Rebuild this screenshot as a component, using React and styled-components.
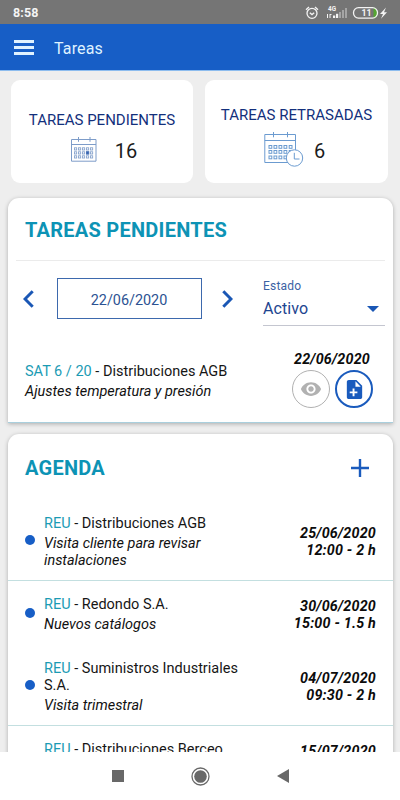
import React, { useState } from "react";
import styled, { createGlobalStyle } from "styled-components";

const GlobalStyle = createGlobalStyle`
  * {
    box-sizing: border-box;
  }
  body {
    margin: 0;
    background-color: #eeeeee;
    font-family: Roboto, "Liberation Sans", sans-serif;
  }
`;

const Screen = styled.div`
  width: 400px;
  height: 800px;
  display: flex;
  flex-direction: column;
  overflow: hidden;
  background-color: #eeeeee;
`;

const StatusBar = styled.div`
  height: 24px;
  flex-shrink: 0;
  display: flex;
  align-items: center;
  justify-content: space-between;
  padding: 1px 10px 0 13px;
  background-color: #757575;
  color: #f4f4f4;
`;
const Clock = styled.span`
  font-size: 12.5px;
  font-weight: 700;
  letter-spacing: 0.1px;
`;
const StatusIcons = styled.svg`
  width: 86px;
  height: 16px;
`;

const Toolbar = styled.header`
  height: 47px;
  flex-shrink: 0;
  display: flex;
  align-items: center;
  gap: 20px;
  padding-left: 14px;
  background-color: #175ec6;
  border-bottom: 1px solid #8dbcee;
`;
const MenuButton = styled.button`
  width: 20px;
  height: 15px;
  padding: 0;
  border: none;
  background-color: transparent;
  display: flex;
  flex-direction: column;
  justify-content: space-between;
  cursor: pointer;
`;
const MenuLine = styled.span`
  width: 100%;
  height: 3px;
  background-color: #e0f2ff;
`;
const ToolbarTitle = styled.h1`
  margin: 2px 0 0;
  font-size: 16px;
  font-weight: 400;
  letter-spacing: 0.15px;
  color: #dff2ff;
`;

const Content = styled.main`
  flex: 1;
  min-height: 0;
  overflow: hidden;
  padding: 9px 7px 0 8px;
`;

const Stats = styled.div`
  display: flex;
  gap: 12px;
  padding: 0 5px 0 3px;
  margin-bottom: 15px;
`;
const StatCard = styled.div`
  width: ${({ $width }) => $width}px;
  height: 103px;
  display: flex;
  flex-direction: column;
  align-items: center;
  padding-top: ${({ $top }) => $top}px;
  border-radius: 9px;
  background-color: #fff;
`;
const StatLabel = styled.div`
  height: 20px;
  font-size: 15px;
  line-height: 20px;
  color: #13307c;
  white-space: nowrap;
`;
const StatBody = styled.div`
  display: flex;
  align-items: center;
  gap: ${({ $gap }) => $gap}px;
  padding-left: ${({ $left }) => $left}px;
  padding-right: ${({ $right }) => $right}px;
  margin-top: 7px;
`;
const StatValue = styled.span`
  padding-top: 2px;
  font-size: 20px;
  line-height: 24px;
  color: #1c1c1c;
`;

const Card = styled.section`
  height: ${({ $height }) => $height}px;
  margin-bottom: 11px;
  overflow: hidden;
  background-color: #fff;
  border-radius: 11px 11px 0 0;
  border-bottom: 1px solid #a9cfdd;
  box-shadow: 0 1px 4px rgba(0, 0, 0, 0.28);
`;
const CardHeader = styled.div`
  height: ${({ $height }) => $height}px;
  display: flex;
  align-items: center;
  justify-content: space-between;
  margin: 0 8px;
  padding: 2px 16px 0 9px;
  border-bottom: 1px solid ${({ $line }) => ($line ? "#ebebeb" : "transparent")};
`;
const CardTitle = styled.h2`
  margin: 0;
  font-size: 20px;
  font-weight: 700;
  letter-spacing: 0.25px;
  color: #0d93b5;
`;

const Filters = styled.div`
  display: flex;
  align-items: flex-start;
  padding: 17px 8px 0 15px;
`;
const ArrowButton = styled.button`
  width: 11px;
  height: 42px;
  padding: 0;
  border: none;
  background-color: transparent;
  display: flex;
  align-items: center;
  cursor: pointer;
`;
const DateBox = styled.div`
  width: 145px;
  height: 41px;
  margin: 0 20px 0 23px;
  display: flex;
  align-items: center;
  justify-content: center;
  padding: 3px 1px 0 0;
  border: 1px solid #3d69ad;
  font-size: 14.4px;
  color: #2b5292;
`;
const Select = styled.div`
  width: 122px;
  height: 48px;
  margin-left: 30px;
  border-bottom: 1px solid #c4c6d0;
`;
const SelectLabel = styled.div`
  font-size: 12px;
  line-height: 17px;
  letter-spacing: 0.2px;
  color: #3b62a3;
`;
const SelectValue = styled.div`
  display: flex;
  align-items: center;
  justify-content: space-between;
  padding: 2px 6px 0 0;
  font-size: 16px;
  line-height: 24px;
  letter-spacing: 0.1px;
  color: #1d4590;
`;

const Task = styled.div`
  display: flex;
  justify-content: space-between;
  padding: 25px 20px 0 17px;
`;
const TaskText = styled.div`
  padding-top: 12px;
`;
const TaskSide = styled.div`
  display: flex;
  flex-direction: column;
  align-items: flex-end;
`;
const TaskDate = styled.div`
  padding-right: 3px;
`;
const TaskActions = styled.div`
  display: flex;
  gap: 5px;
  margin-top: 2px;
`;
const RoundButton = styled.button`
  width: 38px;
  height: 38px;
  padding: 0;
  display: flex;
  align-items: center;
  justify-content: center;
  border: ${({ $border }) => $border}px solid ${({ $color }) => $color};
  border-radius: 50%;
  background-color: #fff;
  color: ${({ $color }) => $color};
  cursor: pointer;
`;

const Name = styled.div`
  font-size: 14.5px;
  line-height: 17px;
  color: #161616;
`;
const Code = styled.span`
  color: #1b9bb4;
`;
const Description = styled.div`
  margin-top: 3px;
  font-size: 14.45px;
  font-style: italic;
  line-height: 17px;
  color: #111;
`;
const When = styled.div`
  font-size: 14.3px;
  font-style: italic;
  font-weight: 700;
  line-height: 17px;
  letter-spacing: 0.2px;
  text-align: right;
  white-space: nowrap;
  color: #0c0c0c;
`;

const AgendaItem = styled.div`
  display: flex;
  align-items: center;
  height: ${({ $height }) => $height}px;
  padding: 0 17px;
  border-bottom: 1px solid ${({ $line }) => ($line ? "#c3dfe0" : "transparent")};
`;
const Dot = styled.span`
  width: 10px;
  height: 10px;
  flex-shrink: 0;
  margin-right: 9px;
  border-radius: 50%;
  background-color: #175ec6;
`;
const AgendaText = styled.div`
  width: 205px;
  margin-right: auto;
  padding-top: 4px;
`;
const AgendaWhen = styled(When)`
  padding-top: 4px;
`;

const NavBar = styled.nav`
  height: 48px;
  flex-shrink: 0;
  display: flex;
  align-items: center;
  justify-content: center;
  gap: 67px;
  background-color: #fff;
`;

const agenda = [
  {
    name: "Distribuciones AGB",
    text: "Visita cliente para revisar instalaciones",
    date: "25/06/2020",
    time: "12:00 - 2 h",
    height: 81,
    line: true,
  },
  {
    name: "Redondo S.A.",
    text: "Nuevos catálogos",
    date: "30/06/2020",
    time: "15:00 - 1.5 h",
    height: 64,
  },
  {
    name: "Suministros Industriales S.A.",
    text: "Visita trimestral",
    date: "04/07/2020",
    time: "09:30 - 2 h",
    height: 81,
    line: true,
  },
  {
    name: "Distribuciones Berceo",
    text: "Visita trimestral",
    date: "15/07/2020",
    time: "10:00 - 1 h",
    height: 64,
  },
];

const CalendarIcon = () => (
  <svg width="26" height="26" viewBox="0 0 26 26" fill="none" stroke="#7d9cc9">
    <path d="M.5 2.5h24.500v21.700H.5zM.5 7.500h24.500" />
    <path d="M7.500 0v4.800M19 0v4.800" />
    {[10.8, 14.8, 18.8].map((y) =>
      [3.5, 7.5, 11.5, 15.5, 19.5].map((x) => (
        <rect key={`${x}-${y}`} x={x} y={y} width="2.2" height="2.2" strokeWidth=".8" />
      ))
    )}
    <rect x="15.5" y="14.8" width="2.2" height="2.2" fill="#2f5fae" stroke="#4a74b8" />
  </svg>
);

const LateCalendarIcon = () => (
  <svg width="40" height="35" viewBox="0 0 40 35" fill="none" stroke="#6b9bd0">
    <path d="M.8 2.500h30.700v28H.8zM.8 8.500h30.700" />
    <path d="M9.500 0v5.300M23.500 0v5.300" />
    {[13.5, 18.5, 24].map((y) =>
      [5, 10, 15, 20, 25.2].map((x) => (
        <rect key={`${x}-${y}`} x={x} y={y} width="2.8" height="2.8" />
      ))
    )}
    <circle cx="30.5" cy="26" r="8.2" fill="#fff" />
    <path d="M30.300 20.800v6.200h5.200" />
  </svg>
);

const StatusGlyphs = () => (
  <StatusIcons viewBox="0 0 86 16" fill="none" stroke="#f4f4f4">
    <circle cx="8" cy="8.3" r="5" strokeWidth="1.3" />
    <path d="M5.800 7.800l2.200 1.800 2.200-1.800M2 4.800l3-2.800M14 4.800l-3-2.800" strokeWidth="1.3" />
    <text x="24" y="6.3" fontSize="6.4" fontWeight="700" fill="#f4f4f4" stroke="none">
      4G
    </text>
    <path d="M23.500 9v4M26 9v4M26 9.500h1.500" />
    <g stroke="none" fill="#f4f4f4">
      <rect x="29" y="10.5" width="2.2" height="2.5" />
      <rect x="32" y="8.8" width="2.2" height="4.2" />
      <g fill="#a5a5a5">
        <rect x="35" y="7" width="2" height="6" />
        <rect x="38" y="5" width="2" height="8" />
        <rect x="41" y="3" width="2" height="10" />
      </g>
    </g>
    <path d="M70 3.200h.5q2.500 0 2.500 4.800t-2.500 4.800h-.5z" fill="#55a532" stroke="#55a532" />
    <rect x="49.5" y="2.7" width="24" height="10.4" rx="5" strokeWidth="1.3" />
    <text x="57.5" y="11.2" fontSize="8.8" fontWeight="700" fill="#f4f4f4" stroke="none">
      11
    </text>
    <path d="M82 2.500l-6 6.500h3l-2 4.800 6-6.600h-3z" fill="#f4f4f4" stroke="none" />
  </StatusIcons>
);

const Chevron = ({ right }) => (
  <svg width="11" height="18" viewBox="0 0 11 18" fill="none" stroke="#1a57b5" strokeWidth="3">
    <path d={right ? "M1.300 1.300L9 9l-7.700 7.700" : "M9.700 1.300L2 9l7.700 7.700"} />
  </svg>
);

const EyeIcon = () => (
  <svg width="22" height="22" viewBox="0 0 24 24" fill="currentColor">
    <path d="M12 4.500C7 4.500 2.730 7.610 1 12c1.730 4.390 6 7.500 11 7.500s9.270-3.110 11-7.500c-1.730-4.390-6-7.500-11-7.500zM12 17c-2.760 0-5-2.240-5-5s2.240-5 5-5 5 2.240 5 5-2.240 5-5 5zm0-8c-1.660 0-3 1.340-3 3s1.340 3 3 3 3-1.340 3-3-1.340-3-3-3z" />
  </svg>
);

const NoteAddIcon = () => (
  <svg width="23" height="23" viewBox="0 0 24 24" fill="currentColor">
    <path d="M14 2H6c-1.100 0-2 .9-2 2v16c0 1.100.9 2 2 2h12c1.100 0 2-.9 2-2V8l-6-6zm1 14h-3v3h-2v-3H7v-2h3v-3h2v3h3v2zm-2-7V3.500L18.500 9H13z" />
  </svg>
);

const App = () => {
  const [items] = useState(agenda);

  return (
    <>
      <GlobalStyle />
      <Screen>
        <StatusBar>
          <Clock>8:58</Clock>
          <StatusGlyphs />
        </StatusBar>
        <Toolbar>
          <MenuButton aria-label="Menú">
            <MenuLine />
            <MenuLine />
            <MenuLine />
          </MenuButton>
          <ToolbarTitle>Tareas</ToolbarTitle>
        </Toolbar>
        <Content>
          <Stats>
            <StatCard $width={182} $top={30}>
              <StatLabel>TAREAS PENDIENTES</StatLabel>
              <StatBody $gap={18} $left={4} $right={0}>
                <CalendarIcon />
                <StatValue>16</StatValue>
              </StatBody>
            </StatCard>
            <StatCard $width={183} $top={25}>
              <StatLabel>TAREAS RETRASADAS</StatLabel>
              <StatBody $gap={10} $left={0} $right={4}>
                <LateCalendarIcon />
                <StatValue>6</StatValue>
              </StatBody>
            </StatCard>
          </Stats>

          <Card $height={225}>
            <CardHeader $height={63} $line>
              <CardTitle>TAREAS PENDIENTES</CardTitle>
            </CardHeader>
            <Filters>
              <ArrowButton aria-label="Anterior">
                <Chevron />
              </ArrowButton>
              <DateBox>22/06/2020</DateBox>
              <ArrowButton aria-label="Siguiente">
                <Chevron right />
              </ArrowButton>
              <Select>
                <SelectLabel>Estado</SelectLabel>
                <SelectValue>
                  Activo
                  <svg width="12" height="7" viewBox="0 0 12 7">
                    <path d="M0 0h12l-6 6z" fill="#1a57b5" />
                  </svg>
                </SelectValue>
              </Select>
            </Filters>
            <Task>
              <TaskText>
                <Name>
                  <Code>SAT 6 / 20</Code> - Distribuciones AGB
                </Name>
                <Description>Ajustes temperatura y presión</Description>
              </TaskText>
              <TaskSide>
                <TaskDate>
                  <When>22/06/2020</When>
                </TaskDate>
                <TaskActions>
                  <RoundButton $color="#b1b1b1" $border={1.5} aria-label="Ver">
                    <EyeIcon />
                  </RoundButton>
                  <RoundButton $color="#1a5bbd" $border={2} aria-label="Añadir nota">
                    <NoteAddIcon />
                  </RoundButton>
                </TaskActions>
              </TaskSide>
            </Task>
          </Card>

          <Card $height={400}>
            <CardHeader $height={66}>
              <CardTitle>AGENDA</CardTitle>
              <svg width="18" height="18" viewBox="0 0 18 18" stroke="#1a5bbd" strokeWidth="2.4">
                <path d="M9 0v18M0 9h18" />
              </svg>
            </CardHeader>
            {items.map((item) => (
              <AgendaItem key={item.date} $height={item.height} $line={item.line}>
                <Dot />
                <AgendaText>
                  <Name>
                    <Code>REU</Code> - {item.name}
                  </Name>
                  <Description>{item.text}</Description>
                </AgendaText>
                <AgendaWhen>
                  {item.date}
                  <br />
                  {item.time}
                </AgendaWhen>
              </AgendaItem>
            ))}
          </Card>
        </Content>
        <NavBar>
          <svg width="12" height="12" viewBox="0 0 12 12">
            <rect width="12" height="12" fill="#686868" />
          </svg>
          <svg width="19" height="19" viewBox="0 0 19 19">
            <circle cx="9.5" cy="9.5" r="8.5" fill="none" stroke="#686868" strokeWidth="1.3" />
            <circle cx="9.5" cy="9.5" r="6.3" fill="#686868" />
          </svg>
          <svg width="12" height="14" viewBox="0 0 12 14">
            <path d="M12 0v14L0 7z" fill="#686868" />
          </svg>
        </NavBar>
      </Screen>
    </>
  );
};

export default App;
